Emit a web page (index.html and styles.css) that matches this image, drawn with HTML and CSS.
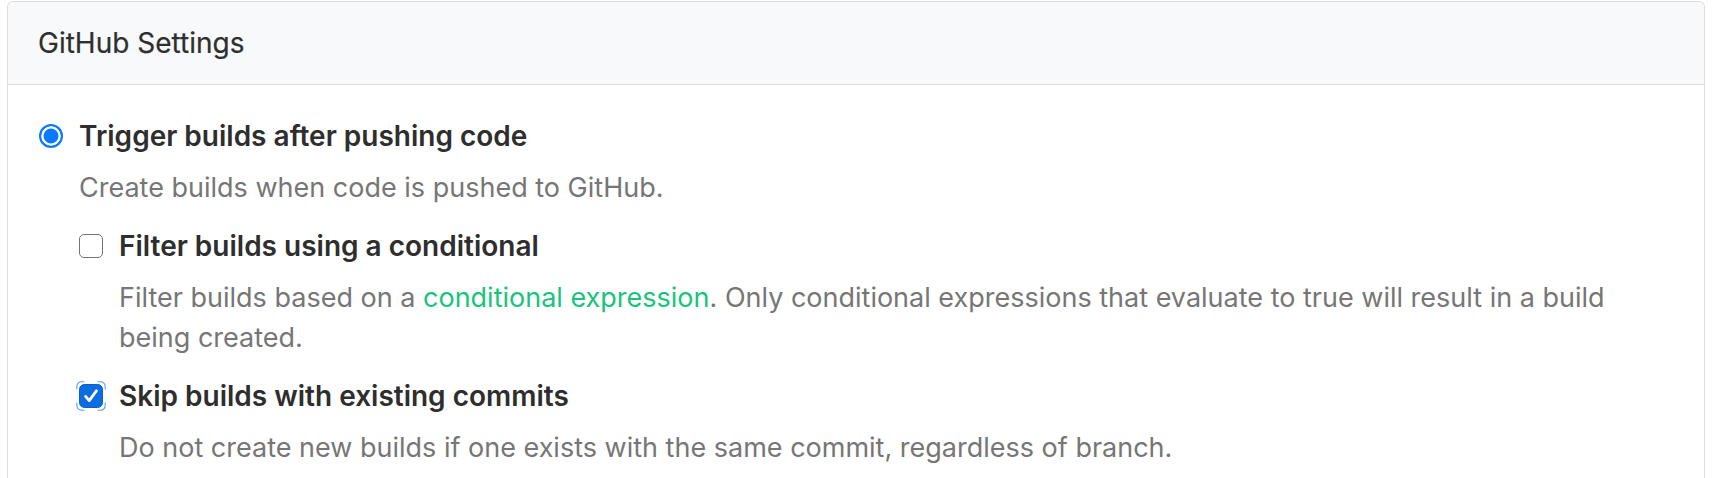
FILE: index.html
```html
<!DOCTYPE html>
<html lang="en">
<head>
<meta charset="utf-8">
<title>GitHub Settings</title>
<link rel="stylesheet" href="styles.css">
</head>
<body>
<section class="card">
  <header class="card-header">
    <h2 class="card-title">GitHub Settings</h2>
  </header>
  <div class="card-body">
    <div class="option">
      <div class="option-row">
        <span class="radio"></span>
        <span class="option-title">Trigger builds after pushing code</span>
      </div>
      <p class="option-desc">Create builds when code is pushed to GitHub.</p>

      <div class="suboptions">
        <div class="option sub">
          <div class="option-row">
            <span class="checkbox"></span>
            <span class="option-title">Filter builds using a conditional</span>
          </div>
          <p class="option-desc">Filter builds based on a <a class="link" href="#">conditional expression</a>. Only conditional expressions that evaluate to true will result in a build being created.</p>
        </div>

        <div class="option sub">
          <div class="option-row">
            <svg class="checkbox-checked" width="24" height="24" viewBox="0 0 24 24">
              <g fill="none" stroke="#5b9cf0" stroke-width="1.1" stroke-linecap="round">
                <path d="M-2.2 5 V3 Q-2.2 -2.2 3 -2.2 H5"/>
                <path d="M19 -2.2 H21 Q26.2 -2.2 26.2 3 V5"/>
                <path d="M26.2 19 V21 Q26.2 26.2 21 26.2 H19"/>
                <path d="M5 26.2 H3 Q-2.2 26.2 -2.2 21 V19"/>
              </g>
              <rect x="0.5" y="0.5" width="23" height="23" rx="5" fill="#0b6de0" stroke="#0a60c8" stroke-width="1"/>
              <path d="M6.6 12.4 L10.2 16.6 L17.4 6.8" fill="none" stroke="#ffffff" stroke-width="2.8" stroke-linecap="round" stroke-linejoin="round"/>
            </svg>
            <span class="option-title">Skip builds with existing commits</span>
          </div>
          <p class="option-desc">Do not create new builds if one exists with the same commit, regardless of branch.</p>
        </div>
      </div>
    </div>
  </div>
</section>
</body>
</html>
```
FILE: styles.css
```css
html, body {
  margin: 0;
  padding: 0;
  background: #ffffff;
}

body {
  font-family: Inter, "Liberation Sans", sans-serif;
  color: #333333;
  overflow: hidden;
}

.card {
  margin: 1px 17px 0 7px;
  border: 1px solid #dcdcdc;
  border-bottom: none;
  border-radius: 6px 6px 0 0;
  min-height: 520px;
}

.card-header {
  height: 82px;
  display: flex;
  align-items: center;
  padding: 0 30px;
  background: #f8f9fa;
  border-bottom: 1px solid #dcdcdc;
  border-radius: 6px 6px 0 0;
}

.card-title {
  margin: 0;
  font-size: 28px;
  font-weight: 400;
  color: #2f2f2f;
  line-height: 36px;
  -webkit-text-stroke: 0.2px #2f2f2f;
}

.card-body {
  padding: 33px 30px 30px 31px;
}

.option-row {
  display: flex;
  align-items: center;
  gap: 16px;
  height: 36px;
}

.option-title {
  font-size: 28px;
  font-weight: 600;
  line-height: 36px;
  color: #2e2e2e;
}

.option-desc {
  margin: 14px 0 0 40px;
  font-size: 27px;
  line-height: 40px;
  color: #767676;
}

.suboptions {
  margin-left: 40px;
}

.option.sub {
  margin-top: 20px;
}

.radio {
  flex: none;
  box-sizing: border-box;
  width: 24px;
  height: 24px;
  border-radius: 50%;
  border: 2.5px solid #0a7aff;
  background: #0a7aff;
  box-shadow: inset 0 0 0 2.5px #ffffff;
}

.checkbox {
  flex: none;
  box-sizing: border-box;
  width: 24px;
  height: 24px;
  border-radius: 5px;
  border: 1.6px solid #747474;
  background: #ffffff;
}

.checkbox-checked {
  flex: none;
  overflow: visible;
}

.link {
  color: #18c47c;
  text-decoration: none;
}
```
